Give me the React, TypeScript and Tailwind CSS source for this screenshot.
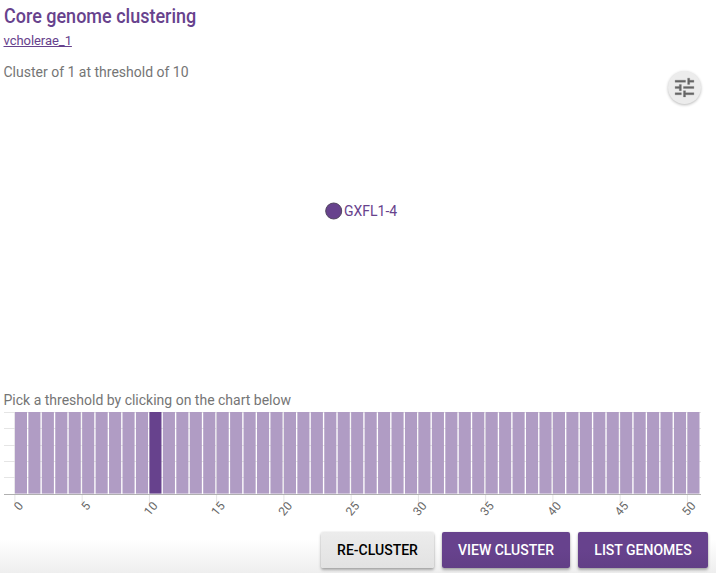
const bars = Array.from({ length: 51 }, (_, i) => i);
const ticks = [0, 5, 10, 15, 20, 25, 30, 35, 40, 45, 50];
const gridLines = [412.5, 428.5, 445.5, 461.5, 477.5];
const PITCH = 13.45;

function ThresholdChart() {
  return (
    <svg className="block h-[117px] w-full" viewBox="0 408 716 117" role="img" aria-label="Threshold chart">
      {gridLines.map((y) => (
        <path key={y} d={`M4 ${y}H701`} stroke="#e5e5e5" />
      ))}
      {ticks.map((t) => (
        <path key={t} d={`M${14.9 + t * PITCH} 412V503`} stroke="#e5e5e5" />
      ))}
      {bars.map((i) => (
        <rect
          key={i}
          x={14.9 + i * PITCH}
          y={412}
          width={12.1}
          height={82}
          fill={i === 10 ? '#67428d' : '#b09cc4'}
        />
      ))}
      <path d="M4 493.5H701" stroke="#fff" strokeOpacity={0.4} />
      <path d="M4 494.5H701" stroke="#b0b0b0" />
      {ticks.map((t) => (
        <text
          key={t}
          transform={`translate(${20.7 + t * PITCH} 503.5) rotate(-50)`}
          textAnchor="end"
          dominantBaseline="central"
          className="fill-[#666] font-['Roboto',sans-serif] text-[12px]"
        >
          {t}
        </text>
      ))}
    </svg>
  );
}

function TuneIcon() {
  return (
    <svg className="size-[25px]" viewBox="0 0 24 24" fill="#666" stroke="#666" strokeWidth="0.25">
      <path d="M3 17v2h6v-2H3zM3 5v2h10V5H3zm10 16v-2h8v-2h-8v-2h-2v6h2zM7 9v2H3v2h4v2h2V9H7zm14 4v-2H11v2h10zm-6-4h2V7h4V5h-4V3h-2v6z" />
    </svg>
  );
}

const buttonBase =
  'h-9 rounded-[2px] text-[14px] font-medium whitespace-nowrap shadow-[0_2px_3px_rgba(0,0,0,0.3),0_0_2px_rgba(0,0,0,0.12)]';

export default function App() {
  return (
    <main className="flex h-[573px] w-[716px] flex-col overflow-hidden bg-white font-['Roboto',sans-serif] text-[14px] text-[#757575]">
      <header className="h-[62px] pt-[4px] pl-[3.5px] text-[#67428d]">
        <h1 className="w-max origin-left scale-x-[.9] text-[20px] leading-[24px] font-medium">
          Core genome clustering
        </h1>
        <a className="mt-[4px] block w-max text-[13px] leading-[18px] tracking-[-0.05px] underline" href="#">
          vcholerae_1
        </a>
      </header>
      <section className="flex h-[329px] flex-col">
        <div className="flex h-[50px] justify-between pr-[15px] pl-[3.5px]">
          <p className="leading-[20px]">Cluster of 1 at threshold of 10</p>
          <button
            aria-label="Settings"
            className="mt-[9px] grid size-[33px] place-items-center rounded-full bg-[#ececec] pr-px shadow-[0_1px_3px_rgba(0,0,0,0.28)]"
          >
            <TuneIcon />
          </button>
        </div>
        <div className="flex pt-[89px] pl-[325px]">
          <svg className="h-[20px] w-[90px] overflow-visible" viewBox="0 0 90 20">
            <circle cx="8.7" cy="10" r="8" fill="#67428d" stroke="#524660" />
            <text x="19" y="15" className="fill-[#67428d] text-[14px]">
              GXFL1-4
            </text>
          </svg>
        </div>
      </section>
      <p className="h-[17px] pl-[3.5px] leading-[19px]">Pick a threshold by clicking on the chart below</p>
      <ThresholdChart />
      <footer className="flex h-[48px] justify-end gap-[8px] bg-linear-to-b from-white from-30% to-[#eeeeee] pt-[7px] pr-[8px]">
        <button className={`${buttonBase} w-[113px] bg-linear-to-b from-[#ececec] to-[#e2e2e2] text-black`}>RE-CLUSTER</button>
        <button className={`${buttonBase} w-[128px] bg-linear-to-b from-[#67428d] from-50% to-[#623f86] text-white`}>VIEW CLUSTER</button>
        <button className={`${buttonBase} w-[130px] bg-linear-to-b from-[#67428d] from-50% to-[#623f86] text-white`}>LIST GENOMES</button>
      </footer>
    </main>
  );
}
